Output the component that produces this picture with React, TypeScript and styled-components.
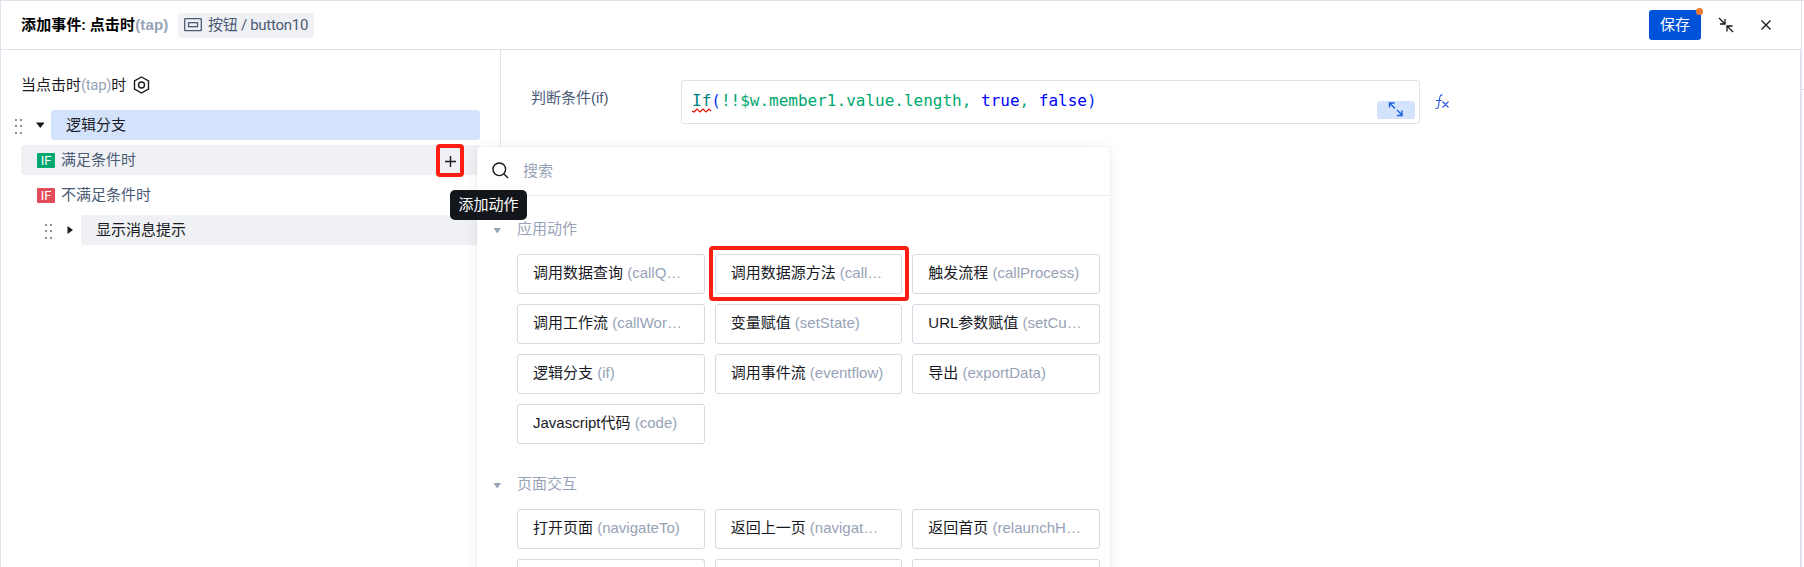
import React from "react";
import styled, { createGlobalStyle } from "styled-components";

const cjk = `"Noto Sans CJK SC", sans-serif`;

const Global = createGlobalStyle`
  *, *::before, *::after { box-sizing: border-box; }
  body { margin: 0; background: #fff; overflow: hidden; }
`;

const Page = styled.div`
  position: relative;
  height: 567px;
  overflow: hidden;
  display: flex;
  flex-direction: column;
  border: 1px solid #dfe2ea;
  border-right: 0;
  border-bottom: 0;
  background: #fff;
  color: #181a1f;
  font: 15px/22px Roboto, ${cjk};
  white-space: nowrap;
`;
const Header = styled.header`
  flex: none;
  height: 49px;
  width: 1801px;
  display: flex;
  align-items: center;
  border-bottom: 1px solid #dfe2ea;
  border-right: 1px solid #dfe2ea;
  padding-left: 20px;
`;
const Muted = styled.span`
  color: #97a3b7;
`;
const Title = styled.div`
  font-weight: 600;
  color: #000;
  width: 157px;
  letter-spacing: 0.15px;
  ${Muted} {
    font-family: "Liberation Sans", sans-serif;
    font-weight: 700;
  }
`;
const Tag = styled.div`
  display: flex;
  align-items: center;
  gap: 6px;
  width: 136px;
  height: 25px;
  padding-left: 6px;
  border-radius: 4px;
  background: #f0f1f5;
  color: #4b5b76;
  line-height: 24px;
  letter-spacing: -0.28px;
`;
const Actions = styled.div`
  margin-left: auto;
  display: flex;
  align-items: center;
  width: 152px;
`;
const Save = styled.button`
  position: relative;
  width: 52px;
  height: 30px;
  padding: 0;
  border: 0;
  border-radius: 3px;
  background: #0052d9;
  color: #fff;
  font: 15px/30px Roboto, ${cjk};
  &::after {
    content: "";
    position: absolute;
    right: -2px;
    top: -2px;
    width: 7px;
    height: 7px;
    border-radius: 50%;
    background: #ed7b2f;
  }
`;
const CollapseIcon = styled.svg`
  margin-left: 17px;
`;
const CloseIcon = styled.svg`
  margin-left: 26px;
`;
const Body = styled.main`
  position: relative;
  flex: 1;
  width: 1801px;
  display: flex;
  border-right: 2px solid #dfe2ea;
  &::after {
    content: "";
    position: absolute;
    left: 1801px;
    top: 39px;
    width: 2px;
    height: 1px;
    background: #dfe2ea;
  }
`;
const Side = styled.aside`
  flex: none;
  width: 500px;
  border-right: 1px solid #dfe2ea;
  padding: 24px 20px 0 13px;
`;
const EventName = styled.div`
  display: flex;
  align-items: center;
  gap: 7px;
  height: 22px;
  padding-left: 7px;
  margin-bottom: 14px;
  ${Muted} {
    letter-spacing: -0.35px;
  }
`;
const Row = styled.div<{ $indent?: number }>`
  display: flex;
  align-items: center;
  height: 30px;
  margin-bottom: 5px;
  padding-left: ${(p) => p.$indent ?? 0}px;
`;
const Handle = styled.svg`
  flex: none;
  margin-top: 2px;
`;
const Caret = styled.svg`
  flex: none;
  margin-left: 12px;
`;
const Node = styled.div<{ $active?: boolean }>`
  flex: 1;
  height: 30px;
  margin-left: 7px;
  padding-left: 15px;
  line-height: 30px;
  border-radius: 3px;
  background: ${(p) => (p.$active ? "#d4e3fc" : "#f0f1f5")};
`;
const Branch = styled.div<{ $hover?: boolean }>`
  flex: 1;
  height: 30px;
  display: flex;
  align-items: center;
  gap: 6px;
  margin-left: 7px;
  padding: 0 23px 0 16px;
  border-radius: 3px;
  color: #4b5b76;
  background: ${(p) => (p.$hover ? "#f0f1f5" : "transparent")};
`;
const IfBadge = styled.span<{ $bad?: boolean }>`
  width: 18px;
  height: 15px;
  margin-top: 1px;
  border-radius: 1px;
  background: ${(p) => (p.$bad ? "#e34d59" : "#00a870")};
  color: #fff;
  font: 400 13px/15px Roboto, sans-serif;
  text-align: center;
`;
const BranchLabel = styled.span`
  height: 30px;
  line-height: 30px;
`;
const PlusIcon = styled.svg`
  margin: 2px 0 0 auto;
`;
const Content = styled.section`
  flex: 1;
  display: flex;
  align-items: flex-start;
  padding: 30px 0 0 30px;
`;
const FieldLabel = styled.label`
  width: 150px;
  line-height: 36px;
  color: #4b5b76;
  font-family: "Liberation Sans", ${cjk};
`;
const Editor = styled.div`
  position: relative;
  width: 739px;
  height: 44px;
  padding-left: 10px;
  border: 1px solid #dfe2ea;
  border-radius: 3px;
  font: 16px/40px "DejaVu Sans Mono", monospace;
  white-space: pre;
`;
const Fn = styled.span`
  position: relative;
  color: #008080;
`;
const Squiggle = styled.svg`
  position: absolute;
  left: 0;
  top: 17px;
`;
const Paren = styled.span`
  color: #0431fa;
`;
const Expr = styled.span`
  color: #00a870;
`;
const Bool = styled.span`
  color: #0000ff;
`;
const Expand = styled.div`
  position: absolute;
  right: 4px;
  bottom: 4px;
  width: 38px;
  height: 18px;
  border-radius: 3px;
  background: #d4e3fc;
  svg {
    display: block;
    margin-left: 11px;
  }
`;
const FxIcon = styled.svg`
  margin: 13px 0 0 15px;
`;
const Popup = styled.div`
  position: absolute;
  left: 476px;
  top: 146px;
  width: 633px;
  height: 440px;
  border-radius: 3px;
  background: #fff;
  box-shadow: 0 0 0 1px rgba(0, 0, 0, 0.035), 0 3px 14px 2px rgba(0, 0, 0, 0.05);
  font-family: "Liberation Sans", ${cjk};
`;
const Search = styled.div`
  display: flex;
  align-items: center;
  gap: 14px;
  height: 49px;
  padding: 0 0 1px 15px;
  border-bottom: 1px solid #e9ebf0;
  color: #97a3b7;
`;
const Group = styled.section<{ $first?: boolean }>`
  padding: ${(p) => (p.$first ? 22 : 29)}px 10px 0 16px;
`;
const GroupTitle = styled.div`
  display: flex;
  align-items: center;
  gap: 20px;
  height: 22px;
  margin-bottom: 14px;
  color: #97a3b7;
`;
const Grid = styled.div`
  display: grid;
  grid-template-columns: repeat(3, 1fr);
  gap: 10px;
  margin-left: 24px;
`;
const Action = styled.div`
  height: 40px;
  padding: 0 16px 0 15px;
  border: 1px solid #d5d9e4;
  border-radius: 3px;
  line-height: 36px;
`;
const Mark = styled.div<{ $x: number; $y: number; $w: number; $h: number }>`
  position: absolute;
  left: ${(p) => p.$x}px;
  top: ${(p) => p.$y}px;
  width: ${(p) => p.$w}px;
  height: ${(p) => p.$h}px;
  border: 4px solid #ff1f12;
  border-radius: 4px;
`;
const Tooltip = styled.div`
  position: absolute;
  left: 449px;
  top: 189px;
  width: 77px;
  height: 30px;
  border-radius: 5px;
  background: #13161b;
  color: #fff;
  text-align: center;
  line-height: 30px;
`;

const appActions = [
  ["调用数据查询", "(callQ…"],
  ["调用数据源方法", "(call…"],
  ["触发流程", "(callProcess)"],
  ["调用工作流", "(callWor…"],
  ["变量赋值", "(setState)"],
  ["URL参数赋值", "(setCu…"],
  ["逻辑分支", "(if)"],
  ["调用事件流", "(eventflow)"],
  ["导出", "(exportData)"],
  ["Javascript代码", "(code)"],
];
const pageActions = [
  ["打开页面", "(navigateTo)"],
  ["返回上一页", "(navigat…"],
  ["返回首页", "(relaunchH…"],
  ["", ""],
  ["", ""],
  ["", ""],
];

function DragHandle() {
  return (
    <Handle width="10" height="16" viewBox="0 0 10 16" fill="#8d8f94">
      {[1, 7, 14].map((y) => (
        <React.Fragment key={y}>
          <rect x="1" y={y} width="2" height="2" />
          <rect x="6" y={y} width="2" height="2" />
        </React.Fragment>
      ))}
    </Handle>
  );
}

function ActionGroup({ title, items, first }: { title: string; items: string[][]; first?: boolean }) {
  return (
    <Group $first={first}>
      <GroupTitle>
        <svg width="4" height="22" viewBox="0 0 4 22" overflow="visible">
          <path d="M.5 10H8l-3.750 5.500z" fill="#97a3b7" />
        </svg>
        {title}
      </GroupTitle>
      <Grid>
        {items.map(([name, code], i) => (
          <Action key={i}>
            {name} <Muted>{code}</Muted>
          </Action>
        ))}
      </Grid>
    </Group>
  );
}

export default function App() {
  return (
    <Page>
      <Global />
      <Header>
        <Title>
          添加事件: 点击时<Muted>(tap)</Muted>
        </Title>
        <Tag>
          <svg width="18" height="14" viewBox="0 0 18 14" fill="none" stroke="#4b5b76" strokeWidth="1.3">
            <rect x=".7" y=".7" width="16.6" height="12" rx=".5" />
            <rect x="4.5" y="4.7" width="9" height="4" />
          </svg>
          按钮 / button10
        </Tag>
        <Actions>
          <Save>保存</Save>
          <CollapseIcon width="16" height="16" viewBox="0 0 16 16" fill="none" stroke="#181a1f" strokeWidth="1.3">
            <path d="M1 1l6 6M7 2v5H2M15 15L9 9M9 14.500V9h5.500" />
          </CollapseIcon>
          <CloseIcon width="12" height="12" viewBox="0 0 12 12" fill="none" stroke="#181a1f" strokeWidth="1.4">
            <path d="M1.5 1.5l9 9M10.5 1.5l-9 9" />
          </CloseIcon>
        </Actions>
      </Header>
      <Body>
        <Side>
          <EventName>
            <span>
              当点击时<Muted>(tap)</Muted>时
            </span>
            <svg width="17" height="18" viewBox="0 0 17 18" fill="none" stroke="#181a1f" strokeWidth="1.4">
              <path d="M8.500 1l7 4v8l-7 4-7-4V5z" />
              <circle cx="8.5" cy="9" r="3" />
            </svg>
          </EventName>
          <Row>
            <DragHandle />
            <Caret width="8" height="8" viewBox="0 0 8 8">
              <path d="M0 1.500h8.500L4.250 7z" fill="#181a1f" />
            </Caret>
            <Node $active>逻辑分支</Node>
          </Row>
          <Row>
            <Branch $hover>
              <IfBadge>IF</IfBadge>
              <BranchLabel>满足条件时</BranchLabel>
              <PlusIcon width="13" height="13" viewBox="0 0 13 13" stroke="#181a1f" strokeWidth="1.4">
                <path d="M6.500 1v11M1 6.500h11" />
              </PlusIcon>
            </Branch>
          </Row>
          <Row>
            <Branch>
              <IfBadge $bad>IF</IfBadge>
              <BranchLabel>不满足条件时</BranchLabel>
            </Branch>
          </Row>
          <Row $indent={30}>
            <DragHandle />
            <Caret width="8" height="10" viewBox="0 0 8 10">
              <path d="M1.500 1v8L7 5z" fill="#181a1f" />
            </Caret>
            <Node>显示消息提示</Node>
          </Row>
        </Side>
        <Content>
          <FieldLabel>判断条件(if)</FieldLabel>
          <Editor>
            <Fn>
              If
              <Squiggle width="20" height="5" viewBox="0 0 20 5" fill="none" stroke="#e51400" strokeWidth="1.2">
                <path d="M0 3l2 1 3-3 3 3 3-3 3 3 3-3 2 2" />
              </Squiggle>
            </Fn>
            <Paren>(</Paren>
            <Expr>!!$w.member1.value.length, </Expr>
            <Bool>true</Bool>
            <Expr>, </Expr>
            <Bool>false</Bool>
            <Paren>)</Paren>
            <Expand>
              <svg width="16" height="16" viewBox="0 0 16 16" fill="none" stroke="#1a5fdc" strokeWidth="1.4">
                <path d="M1.500 6.500V2h5M1.500 2L7 7.500M9 9l5 5M14 9.500V14.500H9" />
              </svg>
            </Expand>
          </Editor>
          <FxIcon width="16" height="18" viewBox="0 0 16 18" fill="none" stroke="#2a55d8" strokeWidth="1.1">
            <path d="M7.500 2C5.500 1.500 4.900 3 4.500 6l-1 7c-.3 2-1 2.800-3 2.300M1 7.500h5.500M7.500 8.500l6 6M13.500 8.500l-6 6" />
          </FxIcon>
        </Content>
      </Body>
      <Popup>
        <Search>
          <svg width="17" height="17" viewBox="0 0 17 17" fill="none" stroke="#181a1f" strokeWidth="1.4">
            <circle cx="7.300" cy="7.300" r="6.300" />
            <path d="M12 12l4 4" />
          </svg>
          <span>搜索</span>
        </Search>
        <ActionGroup first title="应用动作" items={appActions} />
        <ActionGroup title="页面交互" items={pageActions} />
      </Popup>
      <Mark $x={708} $y={245} $w={200} $h={55} />
      <Mark $x={435} $y={143} $w={28} $h={33} />
      <Tooltip>添加动作</Tooltip>
    </Page>
  );
}
